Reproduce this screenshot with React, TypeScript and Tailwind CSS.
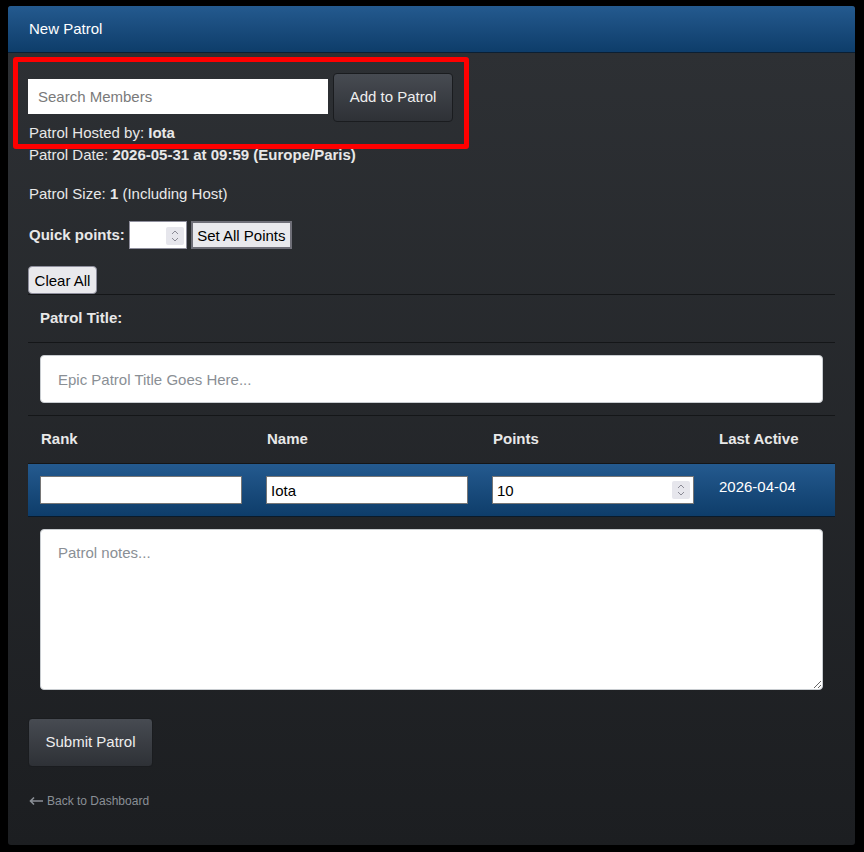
import React from "react";

export default function App() {
  return (
    <div
      className="min-h-[852px] w-[864px] bg-black pt-[6px] pl-[8px] pb-[7px]"
      style={{ fontFamily: '"Liberation Sans", Arial, sans-serif' }}
    >
      <div className="relative w-[847px] h-[839px] rounded-[3px] overflow-hidden bg-gradient-to-b from-[#2e3135] to-[#1c1e21] text-[15px] text-[#e8e8e8]">
        <div className="h-[47px] flex items-center px-[21px] bg-gradient-to-b from-[#245a8f] to-[#0e3d6a] border-b border-[#0b1f33] text-white">
          New Patrol
        </div>

        <div className="px-[20px] pt-[20px]">
          <div className="flex items-center gap-[5px]">
            <input
              type="text"
              placeholder="Search Members"
              className="w-[300px] h-[35px] bg-white px-[10px] text-[15px] text-black placeholder:text-[#7a7a7a] outline-none -translate-y-[1px]"
            />
            <button className="h-[49px] w-[120px] rounded-[4px] border border-[#1a1c1f] bg-gradient-to-b from-[#474b52] to-[#2e3136] text-[15px] text-[#eeeeee]">
              Add to Patrol
            </button>
          </div>

          <div className="leading-[22px] pl-[1px]">
            <div>
              Patrol Hosted by: <b>Iota</b>
            </div>
            <div>
              Patrol Date: <b>2026-05-31 at 09:59 (Europe/Paris)</b>
            </div>
          </div>

          <div className="mt-[17px] leading-[22px] pl-[1px]">
            Patrol Size: <b>1</b> (Including Host)
          </div>

          <div className="mt-[16px] flex items-center pl-[1px]">
            <b>Quick points:</b>
            <div className="relative ml-[4px] w-[58px] h-[28px] bg-white border border-[#8f8f9d]">
              <input
                type="text"
                className="w-full h-full bg-transparent text-black px-[3px] text-[15px] outline-none"
              />
              <Spinner className="absolute right-[2px] top-[5px]" />
            </div>
            <button className="ml-[4px] h-[28px] w-[101px] bg-[#e9e9ed] border-2 border-[#6f6f78] text-black text-[15px] leading-none">
              Set All Points
            </button>
          </div>

          <div className="mt-[17px]">
            <button className="h-[28px] w-[69px] bg-[#e9e9ed] border border-[#8f8f9d] rounded-[4px] text-black text-[15px] leading-none">
              Clear All
            </button>
          </div>

          <div className="border-t border-[#141618]">
            <div className="h-[48px] flex items-center px-[12px] border-b border-[#141618] font-bold">
              Patrol Title:
            </div>
            <div className="p-[12px] border-b border-[#141618]">
              <input
                type="text"
                placeholder="Epic Patrol Title Goes Here..."
                className="w-full h-[48px] rounded-[4px] border border-[#c8ccd0] bg-white px-[17px] text-[15px] text-black placeholder:text-[#8a8f95] outline-none"
              />
            </div>
            <div className="grid grid-cols-[226px_226px_226px_1fr] h-[48px] items-center border-b border-[#141618] font-bold">
              <div className="px-[12px] pl-[13px]">Rank</div>
              <div className="px-[12px] pl-[13px]">Name</div>
              <div className="px-[12px] pl-[13px]">Points</div>
              <div className="px-[12px] pl-[13px]">Last Active</div>
            </div>
            <div className="grid grid-cols-[226px_226px_226px_1fr] h-[53px] bg-gradient-to-b from-[#245a8f] to-[#0e3d6a] border-b border-[#0a1a2a]">
              <div className="px-[12px] pt-[12px]">
                <input
                  type="text"
                  className="w-[202px] h-[28px] bg-white border border-[#767676] px-[4px] text-black text-[15px] outline-none"
                />
              </div>
              <div className="px-[12px] pt-[12px]">
                <input
                  type="text"
                  defaultValue="Iota"
                  className="w-[202px] h-[28px] bg-white border border-[#767676] px-[4px] text-black text-[15px] outline-none"
                />
              </div>
              <div className="px-[12px] pt-[12px]">
                <div className="relative w-[202px] h-[28px] bg-white border border-[#767676]">
                  <input
                    type="text"
                    defaultValue="10"
                    className="w-full h-full bg-transparent px-[4px] text-black text-[15px] outline-none"
                  />
                  <Spinner className="absolute right-[3px] top-[4px]" />
                </div>
              </div>
              <div className="pl-[13px] pt-[12px] leading-[22px] text-white">2026-04-04</div>
            </div>
            <div className="p-[12px]">
              <textarea
                placeholder="Patrol notes..."
                className="block w-full h-[161px] rounded-[4px] border border-[#c8ccd0] bg-white px-[17px] py-[12px] text-[15px] text-black placeholder:text-[#8a8f95] outline-none"
              />
            </div>
          </div>

          <button className="mt-[16px] h-[49px] w-[125px] rounded-[4px] border border-[#1a1c1f] bg-gradient-to-b from-[#474b52] to-[#2e3136] text-[15px] text-[#eeeeee]">
            Submit Patrol
          </button>

          <div className="mt-[25px] flex items-center text-[12px] text-[#8a8f96] pl-[1px]">
            <svg width="15" height="10" viewBox="0 0 15 10" className="mr-[3px]">
              <path d="M14 5H1.5M5 1.5L1.5 5L5 8.5" stroke="#8a8f96" strokeWidth="1.6" fill="none" />
            </svg>
            <span>Back to Dashboard</span>
          </div>
        </div>

        <div className="absolute left-[5px] top-[51px] w-[456px] h-[92px] border-[5px] border-[#ff0000] rounded-[3px] pointer-events-none" />
      </div>
    </div>
  );
}

function Spinner({ className }: { className: string }) {
  return (
    <div className={`${className} w-[18px] h-[18px] bg-[#e6e6ec] rounded-[2px] flex items-center justify-center`}>
      <svg width="10" height="14" viewBox="0 0 10 14">
        <path d="M2 5L5 2L8 5M2 9L5 12L8 9" stroke="#8a8a95" strokeWidth="1" fill="none" />
      </svg>
    </div>
  );
}
